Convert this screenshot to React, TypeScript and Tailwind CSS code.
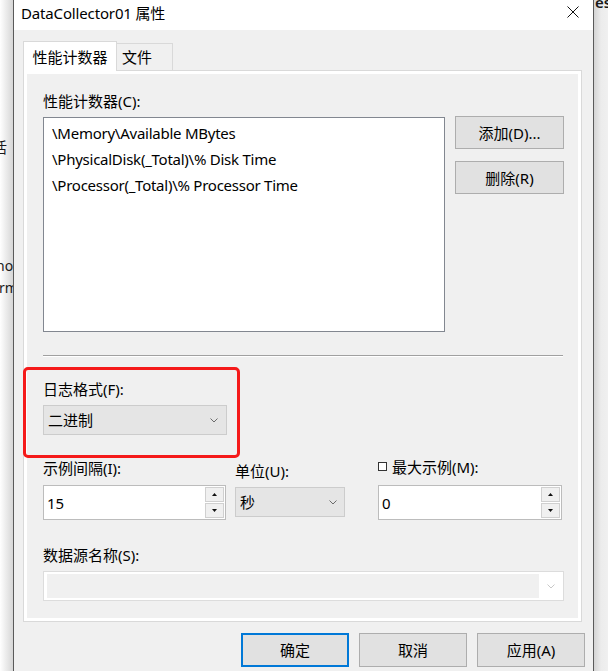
import React from "react";

const Chevron = ({ color = "#6b6b6b" }: { color?: string }) => (
  <svg width="8" height="5" viewBox="0 0 8 5" fill="none">
    <path d="M0.5 0.5L4 4L7.5 0.5" stroke={color} strokeWidth="1" />
  </svg>
);

const SpinArrow = ({ up }: { up?: boolean }) => (
  <svg width="5" height="3" viewBox="0 0 5 3">
    {up ? <path d="M0 3L2.5 0L5 3Z" fill="#111" /> : <path d="M0 0L2.5 3L5 0Z" fill="#111" />}
  </svg>
);

function Spin({ value, className }: { value: string; className: string }) {
  return (
    <div className={"flex h-[35px] border border-[#bcbcbc] bg-white " + className}>
      <div className="flex flex-1 items-center pl-[3px] leading-[20px]">{value}</div>
      <div className="flex w-[21px] flex-col gap-[1px] p-[1px]">
        <div className="flex flex-1 items-center justify-center border border-[#d0d0d0] bg-[#f0f0f0]">
          <SpinArrow up />
        </div>
        <div className="flex flex-1 items-center justify-center border border-[#d0d0d0] bg-[#f0f0f0]">
          <SpinArrow />
        </div>
      </div>
    </div>
  );
}

export default function App() {
  return (
    <div className="relative flex h-[671px] w-[608px] overflow-hidden bg-white font-['Noto_Sans','Noto_Sans_CJK_SC',sans-serif] text-[15px] text-black">
      {/* left background strip */}
      <div className="flex w-[13px] shrink-0 flex-col overflow-hidden whitespace-nowrap bg-gradient-to-r from-white to-[#d6d6d6] text-[#1a1a1a]">
        <div className="ml-[-8px] mt-[137px] h-[20px] leading-[20px] font-['Noto_Sans_CJK_SC',sans-serif]">活</div>
        <div className="ml-[-4px] mt-[99px] h-[20px] text-[14px] leading-[20px]">nost</div>
        <div className="ml-[-1px] mt-[2px] h-[20px] text-[14px] leading-[20px]">rmat</div>
      </div>

      {/* dialog */}
      <div className="flex w-[581px] shrink-0 flex-col border-x border-[#5a5a5a] bg-[#f0f0f0]">
        {/* title bar */}
        <div className="flex h-[30px] shrink-0 items-start justify-between bg-white pl-[7px] pr-[14px]">
          <div className="pt-[3px] leading-[20px] tracking-[-0.15px]">DataCollector01 属性</div>
          <svg className="mt-[6px]" width="12" height="12" viewBox="0 0 12 12">
            <path d="M0.5 0.5L11.5 11.5M11.5 0.5L0.5 11.5" stroke="#111" strokeWidth="1" />
          </svg>
        </div>

        {/* body */}
        <div className="flex flex-col pl-[9px] pt-[11px]">
          {/* tabs */}
          <div className="flex items-start">
            <div className="relative z-10 flex h-[30px] w-[94px] items-center justify-center border-x border-t border-[#d9d9d9] bg-white leading-[20px]">
              性能计数器
            </div>
            <div className="mt-[2px] flex h-[27px] w-[56px] items-center border-r border-t border-[#d9d9d9] bg-[#f0f0f0] pl-[5px] leading-[20px]">
              文件
            </div>
          </div>

          {/* panel */}
          <div className="mt-[-1px] flex h-[552px] w-[559px] flex-col border border-[#d9d9d9] bg-white p-[3px]">
            <div className="flex flex-1 flex-col bg-[#f0f0f0] px-[16px] pt-[17px]">
              <div className="h-[20px] leading-[20px]">性能计数器(C):</div>
              <div className="mt-[5px] flex items-start">
                <div className="mt-[1px] h-[215px] w-[402px] shrink-0 border border-[#828790] bg-white pl-[8px] pt-[2px] leading-[26px] tracking-[-0.25px] whitespace-nowrap">
                  <div>\Memory\Available MBytes</div>
                  <div>\PhysicalDisk(_Total)\% Disk Time</div>
                  <div>\Processor(_Total)\% Processor Time</div>
                </div>
                <div className="ml-[10px] flex shrink-0 flex-col gap-[12px]">
                  <div className="flex h-[33px] w-[109px] items-center justify-center border border-[#adadad] bg-[#e1e1e1] leading-[20px]">
                    添加(D)...
                  </div>
                  <div className="flex h-[33px] w-[109px] items-center justify-center border border-[#adadad] bg-[#e1e1e1] leading-[20px]">
                    删除(R)
                  </div>
                </div>
              </div>

              <div className="mt-[23px] w-[520px] border-b border-t border-b-white border-t-[#a0a0a0]" />

              <div className="mt-[22px] h-[20px] leading-[20px]">日志格式(F):</div>
              <div className="mt-[6px] flex h-[30px] w-[184px] items-center justify-between border border-[#cccccc] bg-[#e5e5e5] pl-[4px] pr-[8px]">
                <span className="leading-[20px]">二进制</span>
                <Chevron />
              </div>

              <div className="mt-[23px] flex">
                <div className="flex w-[192px] flex-col">
                  <div className="h-[20px] leading-[20px]">示例间隔(I):</div>
                  <Spin value="15" className="mt-[7px] w-[183px]" />
                </div>
                <div className="flex w-[143px] flex-col">
                  <div className="h-[20px] leading-[26px]">单位(U):</div>
                  <div className="mt-[9px] flex h-[30px] w-[110px] items-center justify-between border border-[#cccccc] bg-[#e5e5e5] pl-[4px] pr-[7px]">
                    <span className="leading-[20px]">秒</span>
                    <Chevron />
                  </div>
                </div>
                <div className="flex w-[184px] flex-col">
                  <div className="flex h-[20px] items-center gap-[5px] leading-[20px]">
                    <span className="mt-[-3px] h-[9px] w-[9px] border border-[#333] bg-white" />
                    <span className="mt-[-3px]">最大示例(M):</span>
                  </div>
                  <Spin value="0" className="mt-[7px] w-[184px]" />
                </div>
              </div>

              <div className="mt-[25px] h-[20px] leading-[20px]">数据源名称(S):</div>
              <div className="mt-[6px] flex h-[30px] w-[521px] border border-[#dcdcdc] bg-white py-[2px] pl-[3px]">
                <div className="flex-1 bg-[#f0f0f0]" />
                <div className="flex w-[24px] items-center justify-center">
                  <Chevron color="#c8c8c8" />
                </div>
              </div>
            </div>
          </div>

          {/* bottom buttons */}
          <div className="mt-[11px] flex justify-end gap-[10px] pr-[8px]">
            <div className="flex h-[34px] w-[108px] items-center justify-center border-2 border-[#0078d7] bg-[#e1e1e1] leading-[20px]">
              确定
            </div>
            <div className="flex h-[34px] w-[108px] items-center justify-center border border-[#adadad] bg-[#e1e1e1] leading-[20px]">
              取消
            </div>
            <div className="flex h-[34px] w-[108px] items-center justify-center border border-[#adadad] bg-[#e1e1e1] leading-[20px]">
              应用(A)
            </div>
          </div>
        </div>
      </div>

      {/* right background strip */}
      <div className="flex flex-1 flex-col overflow-hidden whitespace-nowrap bg-gradient-to-r from-[#d4d4d4] via-[#ececec] to-[#f0f0f0]">
        <div className="ml-[1px] mt-[-8px] text-[15px] font-semibold leading-[20px] text-[#1a1a1a]">esign</div>
      </div>

      {/* annotation highlight */}
      <div className="pointer-events-none absolute left-[23px] top-[367px] h-[91px] w-[217px] rounded-[5px] border-[3px] border-[#f51a1a]" />
    </div>
  );
}
